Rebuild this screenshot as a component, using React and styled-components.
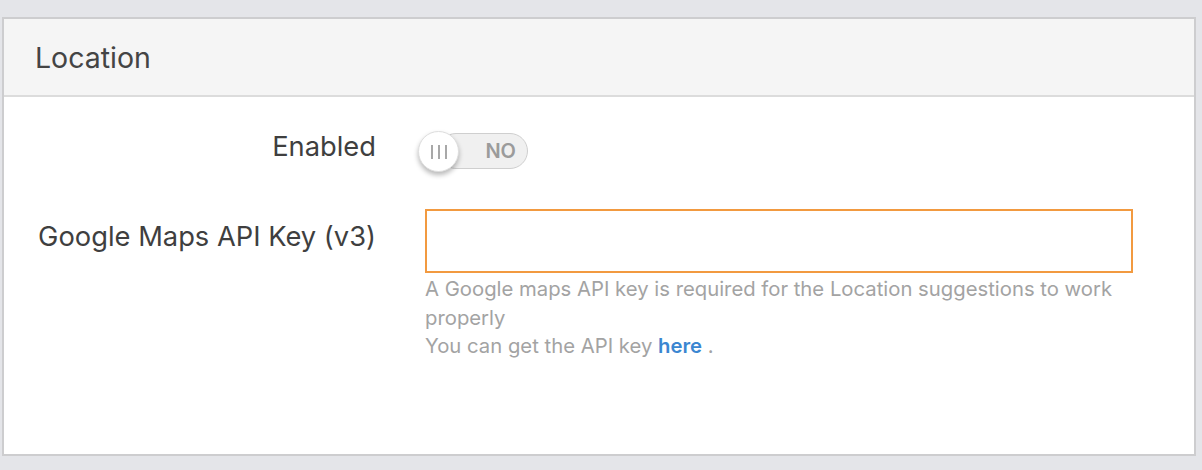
import React from "react";
import styled, { createGlobalStyle } from "styled-components";

const GlobalStyle = createGlobalStyle`
  html, body {
    margin: 0;
    background: #e4e5e9;
  }
  body {
    padding: 17px 6px 14px 2px;
    font-family: Inter, "Noto Sans", sans-serif;
  }
`;

const Panel = styled.section`
  border: 2px solid #cdcdcf;
  background: #fff;
`;

const Header = styled.div`
  height: 76px;
  display: flex;
  align-items: center;
  padding-left: 31px;
  background: #f5f5f5;
  border-bottom: 2px solid #dcdcdc;
  font-size: 28.5px;
  color: #444;
`;

const Body = styled.div`
  height: 357px;
  box-sizing: border-box;
  padding: 34px 61px 0 0;
`;

const Row = styled.div`
  display: grid;
  grid-template-columns: 372px 1fr;
  column-gap: 49px;
  align-items: start;
  margin-top: ${p => p.gap || 0}px;
`;

const Label = styled.label`
  text-align: right;
  font-size: 27.3px;
  color: #3f3f3f;
  line-height: ${p => p.h - 8}px;
  white-space: nowrap;
`;

const Switch = styled.div`
  position: relative;
  width: 110px;
  height: 40px;
  margin-left: -7px;
`;

const Track = styled.div`
  margin: 2px 0 0 20px;
  width: 90px;
  height: 36px;
  box-sizing: border-box;
  border: 1px solid #cfcfcf;
  border-radius: 18px;
  background: #f0f0f0;
  display: flex;
  align-items: center;
  justify-content: flex-end;
  padding-right: 11px;
  font-size: 20px;
  font-weight: 600;
  color: #9b9b9b;
`;

const Knob = styled.div`
  position: absolute;
  left: 0;
  top: 0;
  width: 41px;
  height: 41px;
  box-sizing: border-box;
  border-radius: 50%;
  background: #fff;
  border: 1px solid #dedede;
  box-shadow: 0 3px 5px rgba(0, 0, 0, 0.28);
  display: flex;
  align-items: center;
  justify-content: center;
  gap: 5px;
`;

const Bar = styled.span`
  width: 2px;
  height: 14px;
  background: #a8a8a8;
`;

const Field = styled.div`
  display: flex;
  flex-direction: column;
`;

const Input = styled.input`
  height: 64px;
  box-sizing: border-box;
  border: 2px solid #f29a40;
  outline: none;
  padding: 0 14px;
  font-size: 20px;
  font-family: inherit;
  background: #fff;
`;

const Help = styled.p`
  margin: 2px 0 0;
  font-size: 20.3px;
  line-height: 28.5px;
  color: #a3a3a3;
  padding-right: 10px;
`;

const Link = styled.a`
  color: #3a86d1;
  font-weight: 600;
  text-decoration: none;
`;

export default function App() {
  return (
    <>
      <GlobalStyle />
      <Panel>
        <Header>Location</Header>
        <Body>
          <Row>
            <Label h={40}>Enabled</Label>
            <Switch>
              <Track>NO</Track>
              <Knob>
                <Bar />
                <Bar />
                <Bar />
              </Knob>
            </Switch>
          </Row>
          <Row gap={38}>
            <Label h={64}>Google Maps API Key (v3)</Label>
            <Field>
              <Input type="text" />
              <Help>
                A Google maps API key is required for the Location suggestions to work properly
                <br />
                You can get the API key <Link href="#">here</Link> .
              </Help>
            </Field>
          </Row>
        </Body>
      </Panel>
    </>
  );
}
